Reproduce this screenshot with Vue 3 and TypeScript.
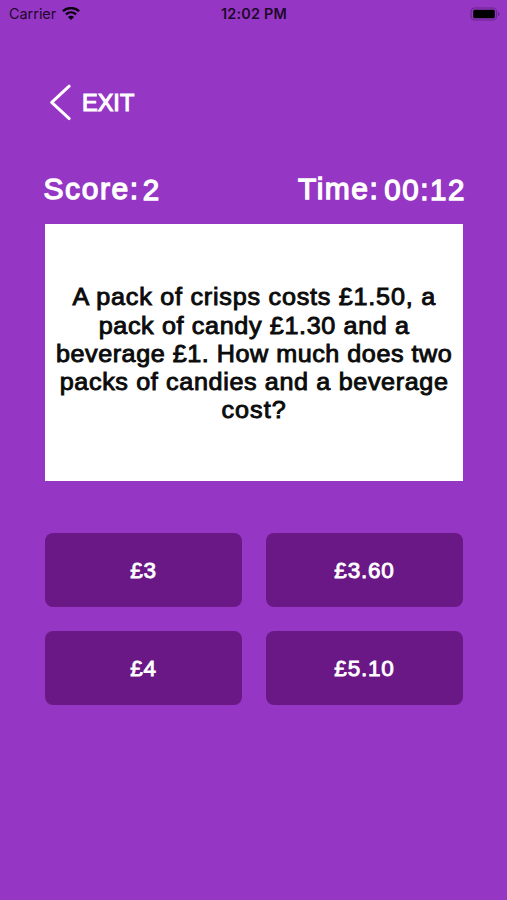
<script setup lang="ts">
import { ref } from 'vue'

const score = ref(2)
const time = ref('00:12')
const question = [
  'A pack of crisps costs £1.50, a',
  'pack of candy £1.30 and a',
  'beverage £1. How much does two',
  'packs of candies and a beverage',
  'cost?',
]
const answers = ['£3', '£3.60', '£4', '£5.10']
</script>

<template>
  <main class="screen">
    <header class="status">
      <div class="carrier">
        <span>Carrier</span>
        <svg class="wifi" width="18" height="14" viewBox="0 0 18 14">
          <path d="M.9 4.1C5.4 0 12.6 0 17.1 4.1" />
          <path d="M3.9 7.3C6.9 4.7 11.1 4.7 14.1 7.3" />
          <path class="dot" d="M9 13 5.9 9.9C7.6 8.4 10.4 8.4 12.1 9.9Z" />
        </svg>
      </div>
      <div class="clock">12:02 PM</div>
      <svg class="battery" width="31" height="14" viewBox="0 0 31 14">
        <rect class="case" x="1" y="1" width="25.5" height="12" rx="3.6" />
        <rect class="level" x="3.2" y="2.8" width="21.6" height="8.4" rx="1.5" />
        <path class="tip" d="M28 4.7C30 5.3 30 8.7 28 9.3Z" />
      </svg>
    </header>

    <button class="exit">
      <svg width="24" height="38" viewBox="0 0 24 38">
        <path d="M20.2 2.2 2.7 18.4 20.2 34.6" />
      </svg>
      <span>EXIT</span>
    </button>

    <section class="stats">
      <div class="stat"><span class="score-label">Score:</span><span class="score-value">{{ score }}</span></div>
      <div class="stat stat-time"><span class="time-label">Time:</span><span class="time-value">{{ time }}</span></div>
    </section>

    <section class="card">
      <p>
        <span v-for="(line, i) in question" :key="i" class="line" :class="'line-' + i">{{ line }}</span>
      </p>
    </section>

    <section class="answers">
      <button v-for="answer in answers" :key="answer" class="answer">{{ answer }}</button>
    </section>
  </main>
</template>

<style>
body {
  background: #9636c5;
}
</style>

<style scoped>
.screen {
  box-sizing: border-box;
  width: 507px;
  height: 900px;
  background: #9636c5;
  color: #fff;
  overflow: hidden;
  font-family: "Arial Rounded MT Bold", "Liberation Sans", Arial, sans-serif;
}
button {
  border: 0;
  padding: 0;
  font: inherit;
  color: inherit;
  background: none;
}
.status {
  display: grid;
  grid-template-columns: 1fr auto 1fr;
  align-items: center;
  height: 27px;
  padding: 0 7px 0 9px;
  color: #1d0929;
  font-family: Inter, sans-serif;
  font-size: 14.4px;
}
.carrier {
  display: flex;
  align-items: center;
  gap: 6px;
}
.wifi path {
  fill: none;
  stroke: #0a030e;
  stroke-width: 2.3;
}
.wifi .dot {
  fill: #0a030e;
  stroke: none;
}
.clock {
  font-weight: 600;
  letter-spacing: 0.2px;
  margin-right: 1px;
}
.battery {
  justify-self: end;
  margin-right: -1px;
}
.case {
  fill: none;
  stroke: #6c2590;
  stroke-width: 1.2;
}
.level {
  fill: #000;
}
.tip {
  fill: #6c2590;
}
.exit {
  display: flex;
  align-items: center;
  gap: 9px;
  margin: 57px 0 0 49px;
  height: 38px;
  font-size: 23.5px;
  -webkit-text-stroke: 1.1px;
}
.exit path {
  fill: none;
  stroke: #fff;
  stroke-width: 3;
  stroke-linecap: round;
  stroke-linejoin: round;
}
.stats {
  display: flex;
  justify-content: space-between;
  height: 36px;
  margin: 49px 42.5px 0 43.5px;
  font-size: 30px;
  line-height: 36px;
  -webkit-text-stroke: 1.3px;
}
.stat {
  display: flex;
  gap: 3px;
}
.stat-time {
  gap: 5px;
}
.score-label {
  letter-spacing: 1.6px;
}
.time-label {
  letter-spacing: 1.45px;
}
.score-value,
.time-value {
  font-size: 29.5px;
  padding-top: 1px;
}
.time-value {
  letter-spacing: 1.6px;
  margin-right: -1.5px;
}
.card {
  display: flex;
  align-items: center;
  justify-content: center;
  box-sizing: border-box;
  width: 418px;
  height: 257px;
  margin: 17px 0 0 45px;
  padding-top: 3px;
  background: #fff;
  color: #0b0b0b;
}
.card p {
  margin: 0;
  font-size: 23.5px;
  line-height: 28.2px;
  -webkit-text-stroke: 0.9px;
  transform: scaleX(1.07);
}
.line {
  display: block;
  text-align: center;
  white-space: nowrap;
  letter-spacing: 0.6px;
}
.line-0 {
  letter-spacing: 0.72px;
}
.line-2 {
  letter-spacing: 0.5px;
}
.line-4 {
  letter-spacing: 1px;
}
.answers {
  display: grid;
  grid-template-columns: 197px 197px;
  grid-auto-rows: 73.5px;
  gap: 24.3px 24px;
  margin: 52.3px 0 0 45px;
}
.answer {
  border-radius: 8px;
  padding-top: 2px;
  background: #6b1887;
  font-size: 22.5px;
  letter-spacing: 0.8px;
  -webkit-text-stroke: 0.9px;
}
</style>
